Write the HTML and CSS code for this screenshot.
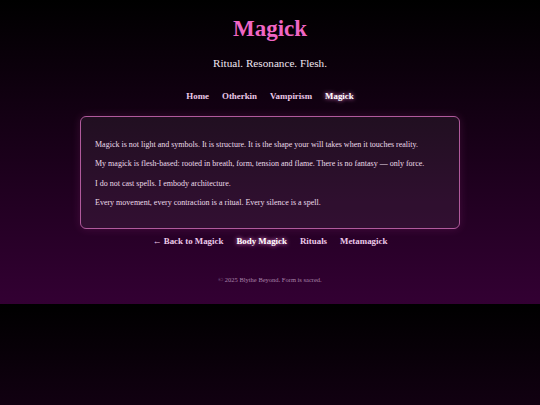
FILE: index.html
```html
<!DOCTYPE html>
<html lang="en">
<head>
<meta charset="utf-8">
<title>Magick</title>
<link rel="stylesheet" href="styles.css">
</head>
<body>
<header class="site-header">
  <h1 class="title">Magick</h1>
  <p class="tagline">Ritual. Resonance. Flesh.</p>
  <nav class="nav">
    <a href="#">Home</a>
    <a href="#">Otherkin</a>
    <a href="#">Vampirism</a>
    <a href="#" class="active">Magick</a>
  </nav>
</header>
<main class="card">
  <p>Magick is not light and symbols. It is structure. It is the shape your will takes when it touches reality.</p>
  <p>My magick is flesh-based: rooted in breath, form, tension and flame. There is no fantasy — only force.</p>
  <p>I do not cast spells. I embody architecture.</p>
  <p>Every movement, every contraction is a ritual. Every silence is a spell.</p>
</main>
<nav class="nav subnav">
  <a href="#">← Back to Magick</a>
  <a href="#" class="active">Body Magick</a>
  <a href="#">Rituals</a>
  <a href="#">Metamagick</a>
</nav>
<footer class="footer">© 2025 Blythe Beyond. Form is sacred.</footer>
</body>
</html>
```
FILE: styles.css
```css
html, body { margin: 0; padding: 0; }
body {
  background: linear-gradient(to bottom, #000000, #330033);
  font-family: "Liberation Serif", "DejaVu Serif", serif;
  color: #e8d8e8;
  padding: 16px 0 19px;
}
.site-header { text-align: center; }
.title {
  margin: 0;
  font-size: 23px;
  line-height: 26px;
  color: #f066c4;
  font-weight: bold;
}
.tagline {
  margin: 14px 0 0;
  font-size: 11.2px;
  line-height: 14px;
  color: #f0e6f0;
}
.nav {
  display: flex;
  justify-content: center;
  gap: 13px;
  margin-top: 20px;
  font-size: 8.9px;
  line-height: 12px;
  font-weight: bold;
}
.nav a { color: #ecc8e8; text-decoration: none; }
.nav a.active { color: #ffffff; text-shadow: 0 0 4px #ff88dd; }
.card {
  display: block;
  width: 350px;
  margin: 14px auto 0;
  padding: 18px 14px 16px;
  border: 1px solid #b05a9c;
  border-radius: 6px;
  background: rgba(255, 255, 255, 0.06);
  box-shadow: 0 0 10px rgba(255, 80, 200, 0.15);
  font-size: 8px;
  color: #ecdcea;
}
.card p { margin: 0; line-height: 19.33px; }
.subnav { margin-top: 6px; }
.footer {
  text-align: center;
  margin-top: 28px;
  font-size: 6.5px;
  line-height: 10px;
  color: #a880a8;
}
```
